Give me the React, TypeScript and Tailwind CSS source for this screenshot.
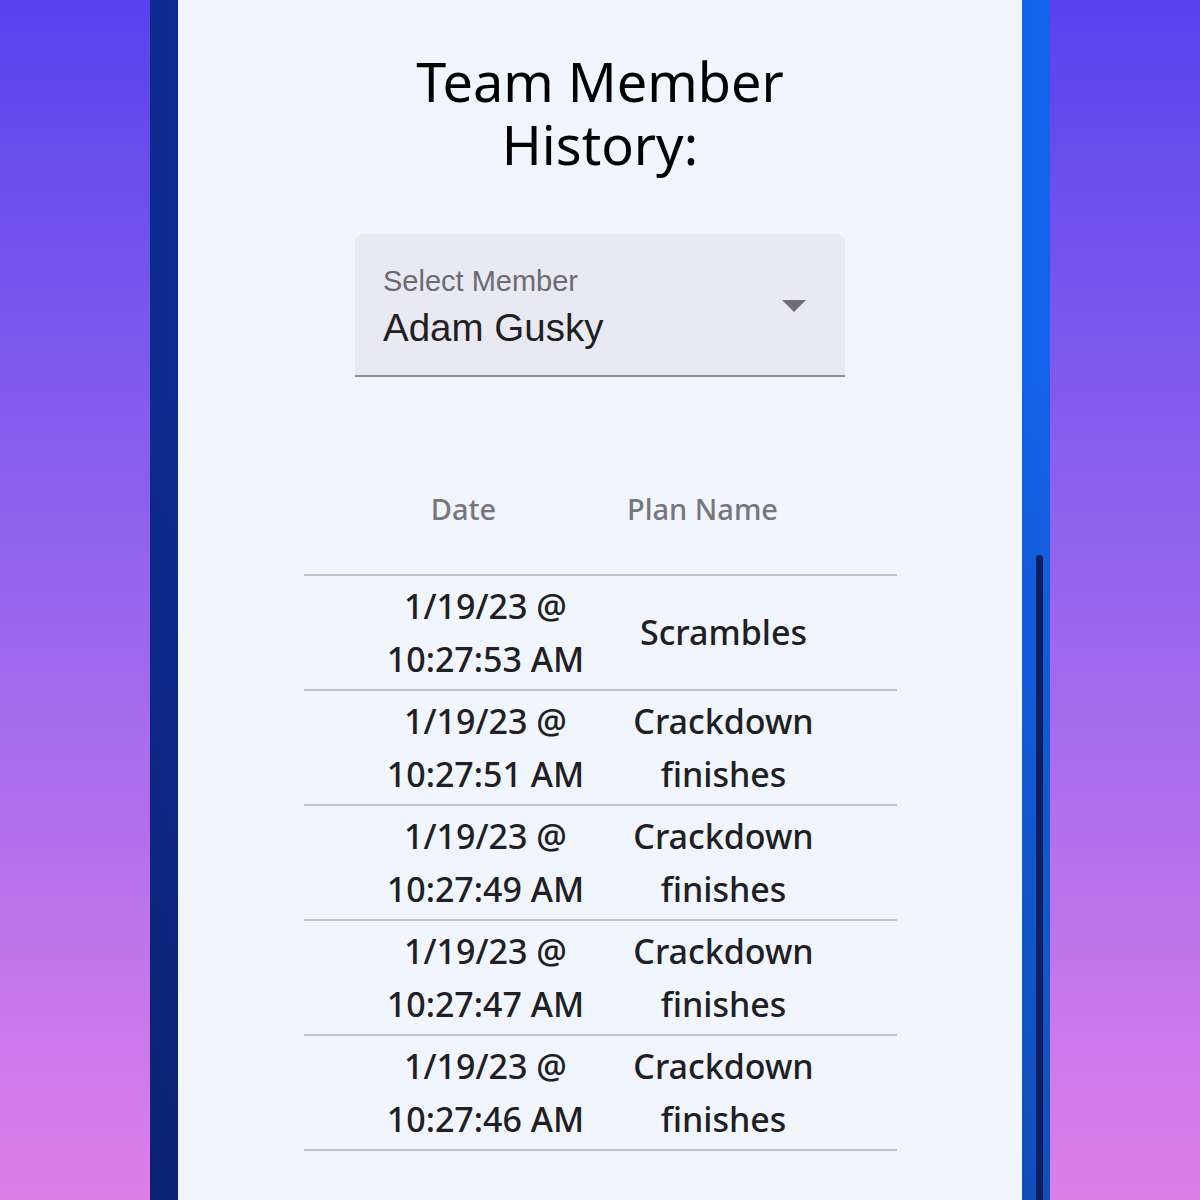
const rows = [
  { date: '1/19/23 @ 10:27:53 AM', plan: 'Scrambles' },
  { date: '1/19/23 @ 10:27:51 AM', plan: 'Crackdown finishes' },
  { date: '1/19/23 @ 10:27:49 AM', plan: 'Crackdown finishes' },
  { date: '1/19/23 @ 10:27:47 AM', plan: 'Crackdown finishes' },
  { date: '1/19/23 @ 10:27:46 AM', plan: 'Crackdown finishes' },
];

export default function App() {
  return (
    <div className="w-full h-[1200px] overflow-hidden bg-linear-to-b from-[#5841ee] to-[#de7ee9] flex justify-center">
      <div className="relative w-[900px] h-full px-[28px] bg-[linear-gradient(to_bottom,rgba(0,0,0,0)_30%,rgba(0,0,0,0.2)),linear-gradient(to_right,#0d2a8f,#1463ea)]">
        <div className="h-full bg-[#f1f5fe] flex flex-col items-center pt-[50px]">
          <h1 className="font-['Noto_Sans',sans-serif] text-[54px] leading-[63px] text-black text-center font-normal">
            <span className="block">Team Member</span>
            <span className="block">History:</span>
          </h1>

          <div className="mt-[58px] w-[490px] h-[143px] bg-[#e9e9f4] rounded-t-[8px] border-b-2 border-[#8e8e96] flex items-center justify-between pl-[28px] pr-[39px] font-['Liberation_Sans',Arial,sans-serif]">
            <div className="flex flex-col pt-[6px]">
              <span className="text-[29px] leading-[32px] text-[#6b6b70]">Select Member</span>
              <span className="mt-[9px] text-[38.5px] leading-[44px] text-[#1f1f22]">Adam Gusky</span>
            </div>
            <svg width="24" height="12" viewBox="0 0 24 12" className="mt-[2px]">
              <polygon points="0,0 24,0 12,12" fill="#6e6e74" />
            </svg>
          </div>

          <div className="mt-[66px] w-[593px] font-['Noto_Sans',sans-serif]">
            <div className="h-[133px] flex items-center border-b-2 border-[#c3c4cb] text-[29px] leading-[40px] font-medium text-[#76767c]">
              <div className="w-[310px] pl-[10px] text-center">Date</div>
              <div className="flex-1 pr-[105px] text-center">Plan Name</div>
            </div>
            {rows.map((r, i) => (
              <div
                key={i}
                className="h-[115px] flex items-center border-b-2 border-[#c3c4cb] text-[34px] leading-[53px] font-medium text-[#202024]"
              >
                <div className="w-[310px] pl-[54px] text-center">{r.date}</div>
                <div className="flex-1 pr-[63px] text-center">{r.plan}</div>
              </div>
            ))}
          </div>
        </div>
        <div className="absolute left-[886px] top-[555px] bottom-0 w-[7px] rounded-t-full bg-[#0b1f5c]" />
      </div>
    </div>
  );
}
